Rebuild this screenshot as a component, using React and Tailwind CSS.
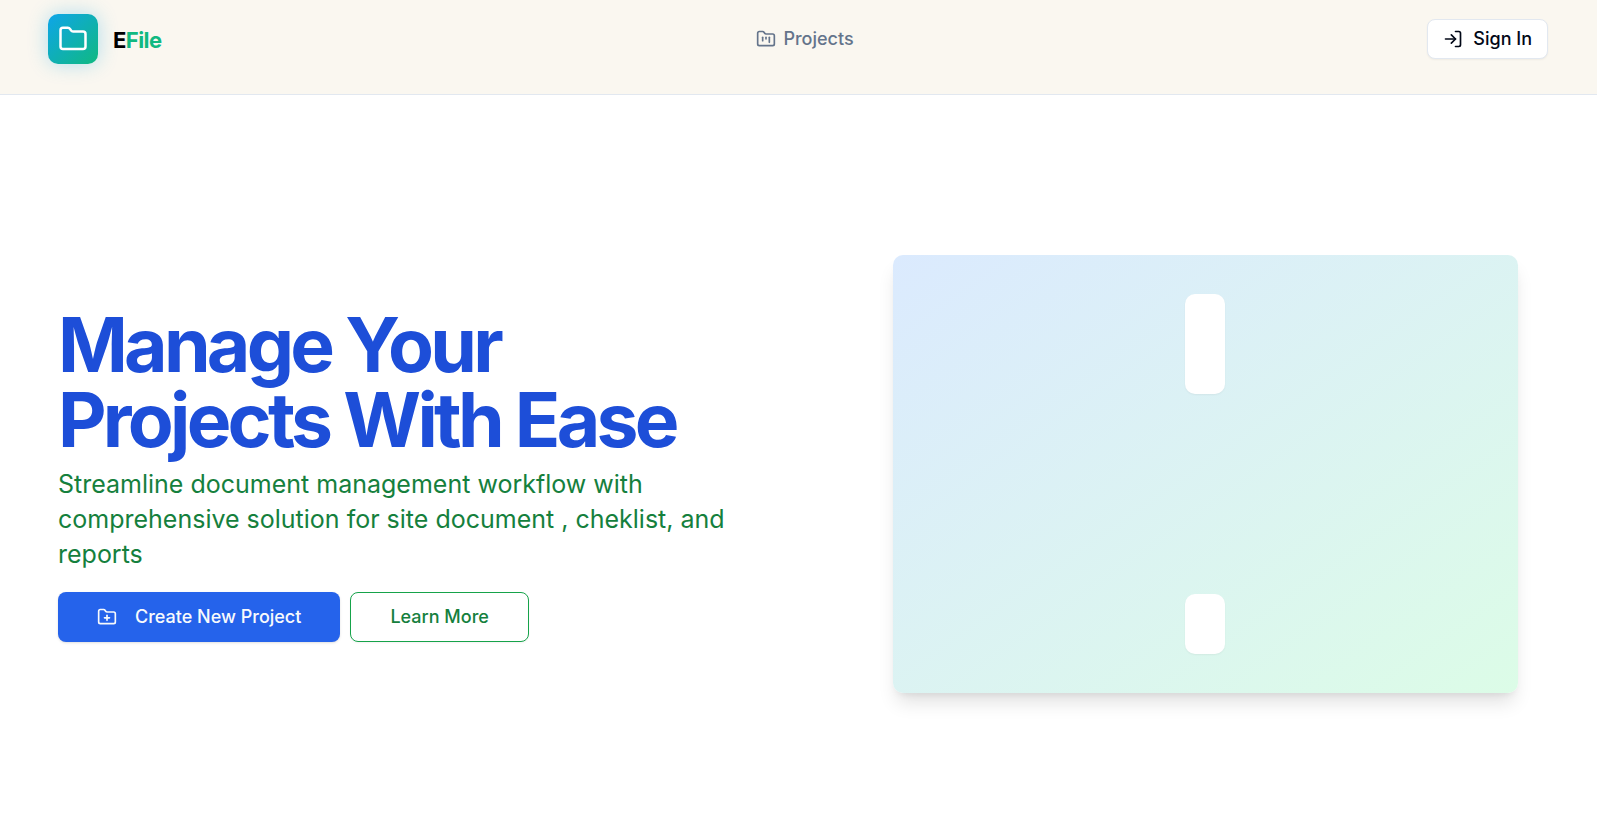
import React from "react";
import { Folder, FolderKanban, FolderPlus, LogIn } from "lucide-react";

function Header() {
  return (
    <header className="flex items-start justify-between border-b border-[#e2e8f0] bg-[#faf7f0] pt-[14px] pr-[49px] pb-[30px] pl-12">
      <div className="flex flex-1 items-center">
        <a href="#home" className="flex items-center gap-[15px]">
          <span className="flex size-[50px] items-center justify-center rounded-[10px] bg-[linear-gradient(135deg,#0ea5e9,#10b981)] text-white shadow-[0_0_20px_rgba(14,165,233,0.3)]">
            <Folder className="size-[30px]" aria-hidden="true" />
          </span>
          <span className="pt-0.5 text-[22px] leading-8 font-bold tracking-tight text-black">
            E<span className="text-[#10b981]">File</span>
          </span>
        </a>
      </div>
      <nav className="flex h-[50px] items-center pl-[14px]">
        <a href="#projects" className="flex items-center gap-[7px] text-[18px] leading-6 font-medium text-[#64748b]">
          <FolderKanban className="size-5" aria-hidden="true" />
          Projects
        </a>
      </nav>
      <div className="flex h-[50px] flex-1 items-center justify-end">
        <button
          type="button"
          className="flex h-10 items-center gap-[10px] rounded-lg border border-[#e2e8f0] bg-white px-[15px] text-[18px] leading-6 font-medium text-[#020817] shadow-xs"
        >
          <LogIn className="size-5" aria-hidden="true" />
          Sign In
        </button>
      </div>
    </header>
  );
}

function Hero() {
  return (
    <main className="grid items-center px-[58px] pt-40 pb-36 lg:grid-cols-[1fr_668px]">
      <section className="max-w-[700px]">
        <h1 className="text-[75px] leading-[75px] font-bold tracking-tighter text-[#1d4ed8]">
          Manage Your Projects With Ease
        </h1>
        <p className="mt-[10px] text-[25px] leading-[35px] text-[#15803d]">
          Streamline document management workflow with comprehensive solution for site document , cheklist, and reports
        </p>
        <div className="mt-5 flex flex-wrap gap-[10px] text-[18px] leading-6 font-medium">
          <button
            type="button"
            className="flex h-[50px] items-center gap-[18px] rounded-lg bg-[#2563eb] px-[39px] text-[#f8fafc] shadow-sm"
          >
            <FolderPlus className="size-5" aria-hidden="true" />
            Create New Project
          </button>
          <button
            type="button"
            className="flex h-[50px] items-center rounded-lg border border-[#16a34a] bg-white px-[39px] text-[#15803d] shadow-xs"
          >
            Learn More
          </button>
        </div>
      </section>
      <div className="mx-auto flex min-h-[438px] w-full max-w-[625px] flex-col items-center justify-between rounded-[10px] bg-[linear-gradient(to_bottom_right,#dbeafe,#dcfce7)] py-[39px] shadow-[0_13px_19px_-4px_rgba(0,0,0,0.12),0_5px_8px_-5px_rgba(0,0,0,0.1)]">
        <div className="h-[100px] w-10 rounded-[10px] bg-white shadow-xs" />
        <div className="h-[60px] w-10 rounded-[10px] bg-white shadow-xs" />
      </div>
    </main>
  );
}

export default function App() {
  return (
    <div className="min-h-screen bg-white font-['Inter',sans-serif]">
      <Header />
      <Hero />
    </div>
  );
}
